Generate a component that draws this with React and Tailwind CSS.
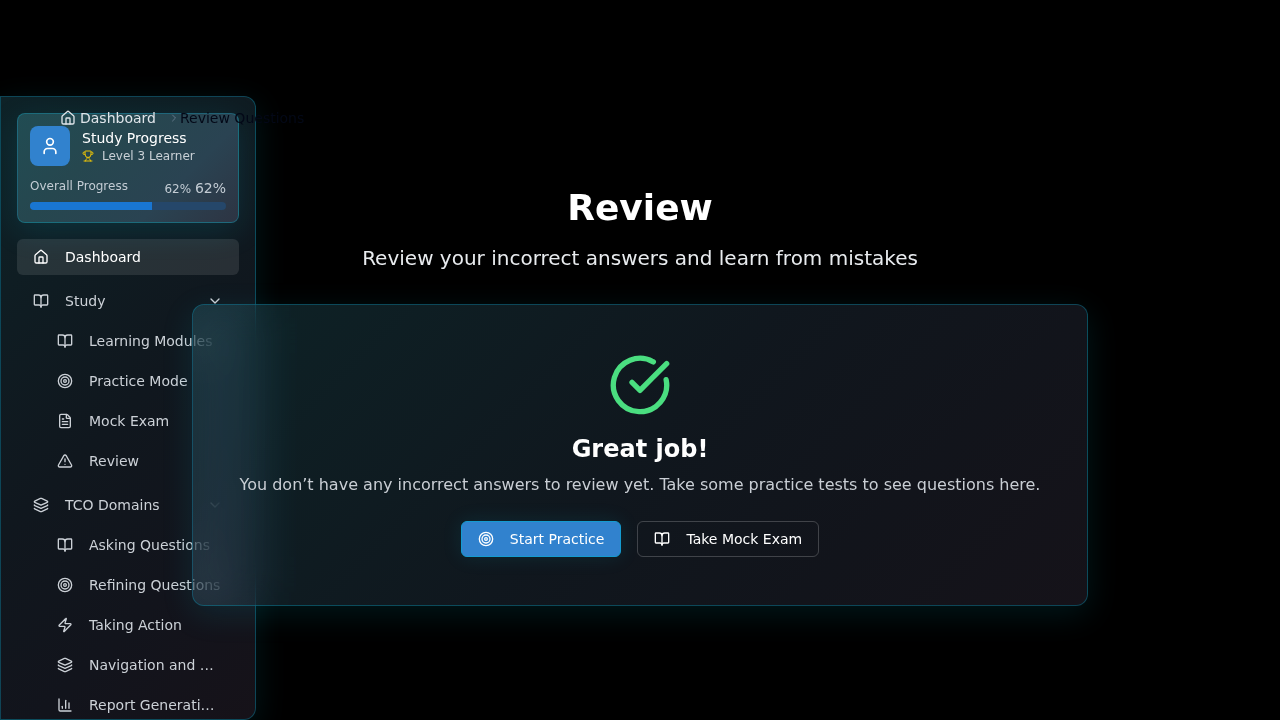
import {
  House, BookOpen, Target, FileText, TriangleAlert, Layers, Zap, ChartColumn,
  ChevronDown, ChevronRight, User, Trophy, CircleCheckBig,
} from "lucide-react";

const study = [
  [BookOpen, "Learning Modules"],
  [Target, "Practice Mode"],
  [FileText, "Mock Exam"],
  [TriangleAlert, "Review"],
];

const domains = [
  [BookOpen, "Asking Questions"],
  [Target, "Refining Questions"],
  [Zap, "Taking Action"],
  [Layers, "Navigation and …"],
  [ChartColumn, "Report Generati…"],
];

function Group({ icon: Icon, label, items }) {
  return (
    <section className="flex flex-col gap-1">
      <button type="button" className="flex h-9 w-full items-center gap-4 px-4 text-left">
        <Icon className="size-4 shrink-0" />
        <span className="flex-1">{label}</span>
        <ChevronDown className="size-4 shrink-0" />
      </button>
      <ul className="flex flex-col gap-1 pl-6">
        {items.map(([ItemIcon, text]) => (
          <li key={text}>
            <a href="#" className="flex h-9 items-center gap-4 px-4">
              <ItemIcon className="size-4 shrink-0" />
              <span className="whitespace-nowrap">{text}</span>
            </a>
          </li>
        ))}
      </ul>
    </section>
  );
}

function Sidebar() {
  return (
    <aside className="fixed top-24 bottom-0 left-0 w-64 overflow-hidden rounded-r-xl border border-[#0891b2]/40 bg-[linear-gradient(135deg,#0e2227_0%,#10171e_50%,#12141c_75%,#161219_100%)] p-4 shadow-[0_8px_32px_rgba(6,182,212,0.13)]">
      <div className="mb-4 flex h-[110px] flex-col rounded-lg border border-[#0fa3bd]/40 bg-[linear-gradient(135deg,#214c53_0%,#26474f_35%,#2a4352_70%,#2d3443_100%)] p-3 shadow-[0_8px_32px_rgba(6,182,212,0.14)]">
        <div className="flex items-center gap-3">
          <span className="flex size-10 items-center justify-center rounded-lg bg-[#3182ce] text-white">
            <User className="size-5" />
          </span>
          <div>
            <h2 className="text-sm leading-5 font-medium text-white">Study Progress</h2>
            <p className="flex items-center gap-2 text-xs leading-4 text-[#c9d0d6]">
              <Trophy className="size-3 text-[#eac308]" />
              Level 3 Learner
            </p>
          </div>
        </div>
        <div className="mt-3 flex items-start justify-between text-xs text-[#c3ccd4]">
          <span>Overall Progress</span>
          <span>
            62% <span className="text-sm">62%</span>
          </span>
        </div>
        <div className="mt-1 h-2 shrink-0 overflow-hidden rounded-full bg-[#25476a]">
          <div className="h-full w-[62%] bg-[#1976d2]" />
        </div>
      </div>
      <nav className="flex flex-col gap-2 text-sm text-[#ccd1d7]">
        <a href="#" className="flex h-9 items-center gap-4 rounded-md bg-white/10 px-4 text-white">
          <House className="size-4" />
          Dashboard
        </a>
        <Group icon={BookOpen} label="Study" items={study} />
        <Group icon={Layers} label="TCO Domains" items={domains} />
      </nav>
    </aside>
  );
}

export default function App() {
  return (
    <div className="min-h-screen bg-black font-['DejaVu_Sans',sans-serif] text-white">
      <Sidebar />
      <main className="relative flex flex-col pt-[108px]">
        <nav aria-label="Breadcrumb" className="flex h-5 items-center pl-[60px] text-sm">
          <a href="#" className="flex items-center gap-1 text-[#dfe5ea]">
            <House className="size-4" />
            Dashboard
          </a>
          <ChevronRight className="ml-3 size-3 text-[#64788a]" />
          <span className="text-[#030817]">Review Questions</span>
        </nav>
        <div className="mx-auto w-full max-w-4xl pt-15">
          <header className="mb-8 text-center">
            <h1 className="mb-4 text-4xl leading-10 font-bold">Review</h1>
            <p className="text-xl leading-7 text-[#e8ebee]">Review your incorrect answers and learn from mistakes</p>
          </header>
          <section className="flex flex-col items-center rounded-xl border border-[#0891b2]/40 bg-[linear-gradient(135deg,rgba(48,124,138,0.28)_0%,rgba(57,82,107,0.28)_50%,rgba(64,72,97,0.28)_75%,rgba(76,66,90,0.28)_100%)] px-6 py-12 text-center shadow-[0_8px_32px_rgba(6,182,212,0.13)] backdrop-blur-[20px] backdrop-brightness-125">
            <CircleCheckBig className="mb-4 size-16 text-[#4ade80]" />
            <h2 className="mb-2 text-2xl leading-8 font-bold">Great job!</h2>
            <p className="mb-6 text-base text-[#c9ced4]">
              You don’t have any incorrect answers to review yet. Take some practice tests to see questions here.
            </p>
            <div className="flex gap-4 text-sm">
              <button type="button" className="flex h-9 items-center gap-4 rounded-md border border-[#149bd0] bg-[#3182ce] px-4 shadow-[0_0_20px_rgba(6,182,212,0.12)]">
                <Target className="size-4" />
                Start Practice
              </button>
              <button type="button" className="flex h-9 items-center gap-4 rounded-md border border-white/20 px-4">
                <BookOpen className="size-4" />
                Take Mock Exam
              </button>
            </div>
          </section>
        </div>
      </main>
    </div>
  );
}
